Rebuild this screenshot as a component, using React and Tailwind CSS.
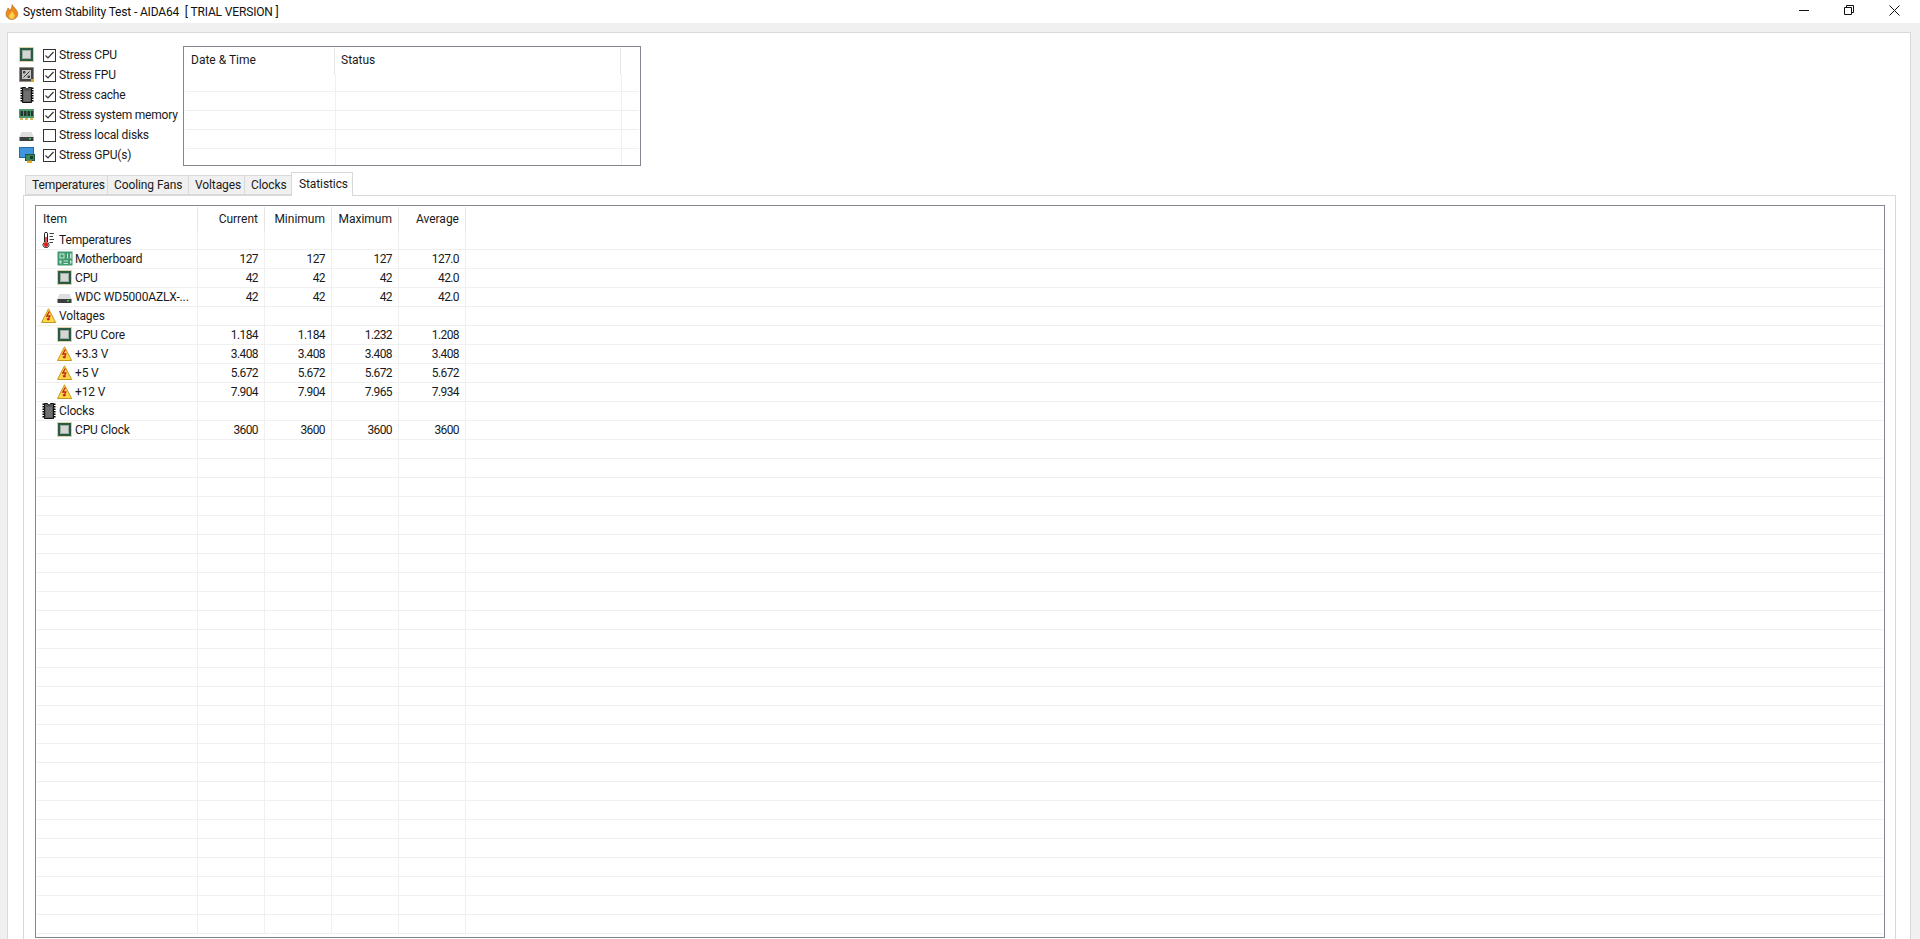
const font = "font-['Roboto','Noto_Sans',sans-serif]";

const stressItems = [
  { icon: "cpu", label: "Stress CPU", checked: true },
  { icon: "fpu", label: "Stress FPU", checked: true },
  { icon: "chip", label: "Stress cache", checked: true },
  { icon: "ram", label: "Stress system memory", checked: true },
  { icon: "disk", label: "Stress local disks", checked: false },
  { icon: "gpu", label: "Stress GPU(s)", checked: true },
];

const tabs = [
  { label: "Temperatures", width: "w-[82px]" },
  { label: "Cooling Fans", width: "w-[81px]" },
  { label: "Voltages", width: "w-[56px]" },
  { label: "Clocks", width: "w-[47px]" },
];

const rows = [
  { icon: "therm", label: "Temperatures", group: true },
  { icon: "board", label: "Motherboard", values: ["127", "127", "127", "127.0"] },
  { icon: "cpu", label: "CPU", values: ["42", "42", "42", "42.0"] },
  { icon: "disk", label: "WDC WD5000AZLX-...", values: ["42", "42", "42", "42.0"] },
  { icon: "warn", label: "Voltages", group: true },
  { icon: "cpu", label: "CPU Core", values: ["1.184", "1.184", "1.232", "1.208"] },
  { icon: "warn", label: "+3.3 V", values: ["3.408", "3.408", "3.408", "3.408"] },
  { icon: "warn", label: "+5 V", values: ["5.672", "5.672", "5.672", "5.672"] },
  { icon: "warn", label: "+12 V", values: ["7.904", "7.904", "7.965", "7.934"] },
  { icon: "chip", label: "Clocks", group: true },
  { icon: "cpu", label: "CPU Clock", values: ["3600", "3600", "3600", "3600"] },
];

function Icon({ name }) {
  if (name === "cpu")
    return (
      <svg width="16" height="16" viewBox="0 0 16 16" className="shrink-0">
        <rect x="0.500" y="0.500" width="14" height="14" fill="none" stroke="#c2a24a" strokeDasharray="1 1" />
        <rect x="1" y="1" width="13" height="13" fill="#2a5c43" />
        <rect x="3.500" y="3.500" width="8" height="8" fill="#d4d7d4" stroke="#a0aba5" />
      </svg>
    );
  if (name === "fpu")
    return (
      <svg width="16" height="16" viewBox="0 0 16 16" className="shrink-0">
        <rect x="0.500" y="0.500" width="14" height="14" fill="#444" stroke="#8a7a48" strokeDasharray="1 1" />
        <rect x="3" y="3" width="9" height="9" fill="#c4c4c4" />
        <path d="M4.500 10.500L10.500 4.500M4.500 4.500h1.500v1.500h-1.500zM9 9h1.500v1.500H9z" stroke="#333" fill="none" />
        <rect x="12" y="12" width="3" height="3" fill="#d8a428" />
      </svg>
    );
  if (name === "chip")
    return (
      <svg width="16" height="16" viewBox="0 0 16 16" className="shrink-0">
        <path d="M2.500 0.500v15M13.500 0.500v15" stroke="#000" strokeWidth="2" strokeDasharray="1.500 1" />
        <path d="M3.500 0.500h3a1.500 1.500 0 0 0 3 0h3v15h-9z" fill="#5a5a5a" stroke="#111" />
        <rect x="5" y="4" width="6" height="10" fill="#6f6f6f" />
      </svg>
    );
  if (name === "ram")
    return (
      <svg width="16" height="16" viewBox="0 0 16 16" className="shrink-0">
        <rect x="0" y="2" width="15" height="9" fill="#4d9a70" />
        <path d="M1.500 4h2.500v5H1.500zM5 4h2.500v5H5zM8.500 4H11v5H8.500zM12 4h2v5h-2z" fill="#24332b" />
        <path d="M1 11h3v2H1zM6 11h3v2H6zM11 11h3v2h-3z" fill="#d8b45a" />
      </svg>
    );
  if (name === "disk")
    return (
      <svg width="16" height="16" viewBox="0 0 16 16" className="shrink-0">
        <path d="M2.500 5h10l2 4.500v1h-14v-1z" fill="#dedede" />
        <rect x="0.500" y="10" width="14" height="4" fill="#3e3e3e" />
        <rect x="10" y="11" width="2" height="1.500" fill="#37d05a" />
      </svg>
    );
  if (name === "gpu")
    return (
      <svg width="16" height="16" viewBox="0 0 16 16" className="shrink-0">
        <rect x="0.500" y="0.500" width="14" height="10" fill="#3f96dc" stroke="#2a6aa5" />
        <rect x="6.500" y="7.500" width="9" height="6" fill="#3a8a5e" stroke="#21583b" />
        <rect x="8" y="13.500" width="5" height="2.500" fill="#e8a92c" />
        <rect x="11" y="9" width="3" height="3" fill="#1d3a2a" />
      </svg>
    );
  if (name === "board")
    return (
      <svg width="16" height="16" viewBox="0 0 16 16" className="shrink-0">
        <rect x="0.500" y="0.500" width="15" height="14" fill="#3f9a6e" />
        <path d="M2.500 2.500h5v5h-5zM10 2.500h1v5h-1zM13 2.500h1.500v5H13zM2.500 9.500h2v3h-2zM6.500 9.500H11v1H6.500zM6.500 12H11v1H6.500zM13 9.500h1.500v3H13z" fill="#cfe6da" />
        <rect x="3.500" y="3.500" width="3" height="3" fill="#3f9a6e" />
      </svg>
    );
  if (name === "therm")
    return (
      <svg width="16" height="16" viewBox="0 0 16 16" className="shrink-0">
        <path d="M3.500 1.800a1.500 1.500 0 0 1 3 0v8.400a3 3 0 1 1-3 0z" fill="#fff" stroke="#222" />
        <path d="M5 5v7" stroke="#d8201c" strokeWidth="1.500" />
        <circle cx="5" cy="12.700" r="2.300" fill="#d8201c" />
        <path d="M8.500 1.500h4.500M8.500 4.500h3.500M8.500 7.500h4.500M8.500 10.500h3.500" stroke="#444" />
      </svg>
    );
  if (name === "warn")
    return (
      <svg width="16" height="16" viewBox="0 0 16 16" className="shrink-0">
        <path d="M7.500 0.800L14.700 14.500H0.500z" fill="#fbd84a" stroke="#c9971c" strokeLinejoin="round" />
        <path d="M8.300 3.500L5.800 8h3L7 12M7 12l-1-1.700M7 12l1.800-1" fill="none" stroke="#c8201c" strokeWidth="1.300" />
      </svg>
    );
  return null;
}

function Check({ checked }) {
  return (
    <span className="flex h-[13px] w-[13px] shrink-0 items-center justify-center border border-[#333] bg-white">
      {checked && (
        <svg width="11" height="11" viewBox="0 0 11 11">
          <path d="M1.500 5.500L4 8l5.500-6" fill="none" stroke="#333" strokeWidth="1.200" />
        </svg>
      )}
    </span>
  );
}

function GridCells({ widths }) {
  return (
    <div className="flex h-full">
      {widths.map((w, i) => (
        <div key={i} className={`${w} h-full border-r border-[#f0f0f0]`} />
      ))}
    </div>
  );
}

function StatusList() {
  const widths = ["w-[151px]", "w-[286px]"];
  return (
    <div className="h-[120px] w-[458px] overflow-hidden border border-[#828790] bg-white p-px">
      <div className="flex h-[26px] text-[12px] text-[#1a1a1a]">
        <div className="w-[150px] border-r border-[#e5e5e5] pl-[6px] pt-[3px]">Date &amp; Time</div>
        <div className="w-[286px] border-r border-[#e5e5e5] pl-[6px] pt-[3px]">Status</div>
      </div>
      <div className="h-[18px] border-b border-[#f0f0f0]"><GridCells widths={widths} /></div>
      {[0, 1, 2, 3].map((i) => (
        <div key={i} className="h-[19px] border-b border-[#f0f0f0]"><GridCells widths={widths} /></div>
      ))}
    </div>
  );
}

function StatRow({ row }) {
  return (
    <div className="flex h-[19px] border-b border-[#f0f0f0] text-[12px] leading-[18px] text-[#1a1a1a]">
      <div className={`flex w-[161px] items-center gap-[2px] overflow-hidden border-r border-[#f0f0f0] ${row?.group ? "pl-[4px]" : "pl-[20px]"}`}>
        {row && <Icon name={row.icon} />}
        {row && <span className="whitespace-nowrap tracking-[-0.15px]">{row.label}</span>}
      </div>
      {[0, 1, 2, 3].map((i) => (
        <div key={i} className="w-[67px] border-r border-[#f0f0f0] pr-[6px] text-right tracking-[-0.6px]">
          {row?.values?.[i]}
        </div>
      ))}
    </div>
  );
}

export default function App() {
  const blanks = Array.from({ length: 37 - rows.length }, (_, i) => i);
  return (
    <div className={`${font} flex h-[939px] flex-col overflow-hidden bg-[#f0f0f0]`}>
      <div className="flex h-[23px] shrink-0 items-center bg-white pl-[4px] text-[12px] text-[#111]">
        <svg width="16" height="16" viewBox="0 0 16 16" className="mr-[3px] shrink-0">
          <path d="M8 .5C9 3 13 5 13.800 9.500 14 13 11 15.500 8 15.500S2 13.500 2 10C2 7.500 3.500 6 4 4c1 .5 1.500 1.500 1.700 2.500C7 5 8.300 3 8 .5z" fill="#f08a1c" stroke="#8a5a2a" strokeWidth=".5" />
          <path d="M8 7c.5 1.500 3 3 2.500 5.500-.300 1.500-1.500 2.500-2.500 2.500s-3-1-3-3c0-1.500 2-2.500 3-5z" fill="#fbd34a" />
        </svg>
        <span className="whitespace-pre pt-px tracking-[-0.15px]">System Stability Test - AIDA64  [ TRIAL VERSION ]</span>
        <div className="ml-auto flex items-center gap-[35px] pb-[3px] pr-[20px]">
          <svg width="10" height="10" viewBox="0 0 10 10"><path d="M0 5.500h10" stroke="#111" /></svg>
          <svg width="10" height="10" viewBox="0 0 10 10"><path d="M.5 2.500h7v7h-7zM2.500 2.500v-2h7v7h-2" fill="none" stroke="#111" /></svg>
          <svg width="11" height="11" viewBox="0 0 11 11"><path d="M.5.500l10 10M10.500.500l-10 10" stroke="#111" /></svg>
        </div>
      </div>

      <div className="ml-[7px] mr-[9px] mt-[9px] flex min-h-0 flex-1 flex-col border-x border-t border-[#d9d9d9] bg-white pl-[11px] pr-[14px]">
        <div className="flex pt-[13px]">
          <div className="-mt-px w-[164px]">
            {stressItems.map((s) => (
              <div key={s.label} className="flex h-[20px] items-center text-[12px] text-[#1a1a1a]">
                <span className="w-[24px]"><Icon name={s.icon} /></span>
                <Check checked={s.checked} />
                <span className="ml-[3px] whitespace-nowrap tracking-[-0.2px]">{s.label}</span>
              </div>
            ))}
          </div>
          <StatusList />
        </div>

        <div className="ml-[6px] mt-[6px] flex h-[23px] text-[12px] tracking-[-0.1px] text-[#1a1a1a]">
          {tabs.map((t) => (
            <div key={t.label} className={`${t.width} mt-[3px] flex h-[20px] items-center border-y border-l border-[#d9d9d9] bg-[#f0f0f0] pl-[6px]`}>{t.label}</div>
          ))}
          <div className="relative z-10 -mb-px flex h-[24px] w-[62px] items-start border-x border-t border-[#d9d9d9] bg-white pl-[7px] pt-[2px]">Statistics</div>
        </div>

        <div className="ml-[4px] flex min-h-0 flex-1 flex-col border-x border-t border-[#d9d9d9] pb-[1px] pl-[11px] pr-[10px] pt-[9px]">
          <div className="flex min-h-0 flex-1 flex-col overflow-hidden border border-[#828790] p-px">
            <div className="flex h-[24px] shrink-0 text-[12px] text-[#1a1a1a]">
              <div className="w-[161px] border-r border-[#e5e5e5] pl-[6px] pt-[3px]">Item</div>
              {["Current", "Minimum", "Maximum", "Average"].map((h) => (
                <div key={h} className="w-[67px] border-r border-[#e5e5e5] pr-[6px] pt-[3px] text-right">{h}</div>
              ))}
            </div>
            {rows.map((r) => <StatRow key={r.label} row={r} />)}
            {blanks.map((i) => <StatRow key={i} />)}
          </div>
        </div>
      </div>
    </div>
  );
}
